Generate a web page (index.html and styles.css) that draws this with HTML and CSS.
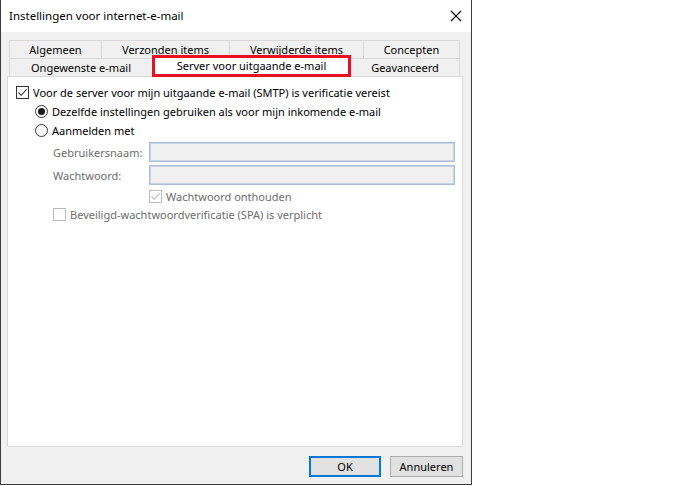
FILE: index.html
```html
<!DOCTYPE html>
<html lang="nl">
<head>
<meta charset="UTF-8">
<title>Instellingen voor internet-e-mail</title>
<link rel="stylesheet" href="styles.css">
</head>
<body>

<div class="dialog">
  <div class="titlebar">
    <span class="title">Instellingen voor internet-e-mail</span>
    <svg class="close" width="12" height="12" viewBox="0 0 12 12"><path d="M1 1L11 11M11 1L1 11" stroke="#000" stroke-width="1.1"/></svg>
  </div>

  <div class="body">
    <div class="tabs">
      <div class="tab-row">
        <div class="tab w92">Algemeen</div>
        <div class="tab w128">Verzonden items</div>
        <div class="tab w134">Verwijderde items</div>
        <div class="tab w97">Concepten</div>
      </div>
      <div class="tab-row">
        <div class="tab w143">Ongewenste e-mail</div>
        <div class="tab tab-active w199">Server voor uitgaande e-mail</div>
        <div class="tab w109">Geavanceerd</div>
      </div>
    </div>

    <div class="panel">
      <div class="row">
        <span class="check checked"><svg width="11" height="11" viewBox="0 0 11 11"><path d="M1.5 5.5L4.2 8.3L9.6 2.3" fill="none" stroke="#333" stroke-width="1.1"/></svg></span>
        <span>Voor de server voor mijn uitgaande e-mail (SMTP) is verificatie vereist</span>
      </div>
      <div class="row indent1">
        <span class="radio on"></span>
        <span>Dezelfde instellingen gebruiken als voor mijn inkomende e-mail</span>
      </div>
      <div class="row indent1">
        <span class="radio"></span>
        <span>Aanmelden met</span>
      </div>

      <div class="field">
        <label>Gebruikersnaam:</label>
        <span class="textbox"></span>
      </div>
      <div class="field">
        <label>Wachtwoord:</label>
        <span class="textbox"></span>
      </div>

      <div class="row disabled indent3 remember">
        <span class="check"><svg width="11" height="11" viewBox="0 0 11 11"><path d="M1.5 5.5L4.2 8.3L9.6 2.3" fill="none" stroke="#bcbcbc" stroke-width="1.1"/></svg></span>
        <span>Wachtwoord onthouden</span>
      </div>
      <div class="row disabled indent2 spa">
        <span class="check"></span>
        <span>Beveiligd-wachtwoordverificatie (SPA) is verplicht</span>
      </div>
    </div>

    <div class="buttons">
      <button type="button" class="btn btn-default">OK</button>
      <button type="button" class="btn">Annuleren</button>
    </div>
  </div>
</div>

</body>
</html>
```

FILE: styles.css
```css
body {
  margin: 0;
  background: #fff;
  font-family: "Noto Sans", sans-serif;
  font-size: 11px;
  color: #000;
}
.dialog {
  width: 470px;
  height: 484px;
  border: 1px solid #3c3c3c;
  border-top: none;
  display: flex;
  flex-direction: column;
}
.titlebar {
  height: 32px;
  background: #fff;
  display: flex;
  align-items: center;
  justify-content: space-between;
  padding: 0 9px 0 8px;
  flex-shrink: 0;
}
.title {
  font-size: 11.5px;
  margin-top: -1px;
}
.body {
  flex: 1;
  background: #f0f0f0;
  padding: 8px 8px 0 6px;
  display: flex;
  flex-direction: column;
}
.tabs {
  padding-left: 2px;
}
.tab-row {
  display: flex;
  height: 18px;
}
.tab {
  box-sizing: border-box;
  height: 18px;
  border: 1px solid #d9d9d9;
  border-right: none;
  border-bottom: none;
  background: #f0f0f0;
  text-align: center;
  line-height: 17px;
}
.tab:last-child {
  border-right: 1px solid #d9d9d9;
}
.tab-active {
  background: #fff;
  height: 22px;
  margin-top: -3px;
  border: 3px solid #e81123;
  line-height: 16px;
  position: relative;
  z-index: 1;
}
.tab-active + .tab {
  border-left: none;
}
.w92 { width: 92px; }
.w128 { width: 128px; }
.w134 { width: 134px; }
.w97 { width: 97px; }
.w143 { width: 143px; }
.w199 { width: 199px; }
.w109 { width: 109px; }

.panel {
  box-sizing: border-box;
  background: #fff;
  border: 1px solid #d9d9d9;
  height: 371px;
  padding: 6px 0 0 8px;
}
.row {
  display: flex;
  align-items: center;
  height: 19px;
  gap: 4px;
}
.indent1 { padding-left: 19px; }
.indent2 { padding-left: 37px; }
.indent3 { padding-left: 133px; }
.disabled { color: #6d6d6d; }
.remember { margin-top: 2px; }
.spa { margin-top: -1px; }

.check {
  box-sizing: border-box;
  width: 13px;
  height: 13px;
  border: 1px solid #333;
  background: #fff;
  display: flex;
  align-items: center;
  justify-content: center;
}
.disabled .check {
  border-color: #bcbcbc;
}
.radio {
  box-sizing: border-box;
  width: 13px;
  height: 13px;
  border: 1px solid #333;
  border-radius: 50%;
  background: #fff;
  display: flex;
  align-items: center;
  justify-content: center;
}
.radio.on::after {
  content: "";
  width: 7px;
  height: 7px;
  border-radius: 50%;
  background: #1a1a1a;
}

.field {
  display: flex;
  align-items: center;
  height: 20px;
  margin-top: 2px;
  padding-left: 37px;
  color: #6d6d6d;
}
.field + .field {
  margin-top: 3px;
}
.field label {
  width: 96px;
}
.textbox {
  box-sizing: border-box;
  width: 306px;
  height: 20px;
  background: #f0f0f0;
  border: 1px solid #abbdd6;
  box-shadow: inset 0 0 0 1px #c9d5e6;
}

.buttons {
  display: flex;
  justify-content: flex-end;
  gap: 9px;
  padding: 9px 0 0;
}
.btn {
  box-sizing: border-box;
  width: 73px;
  height: 21px;
  font-family: inherit;
  font-size: 11px;
  background: #e1e1e1;
  border: 1px solid #adadad;
  padding: 0;
  color: #000;
}
.btn-default {
  width: 72px;
  border: 2px solid #0078d7;
}
```
